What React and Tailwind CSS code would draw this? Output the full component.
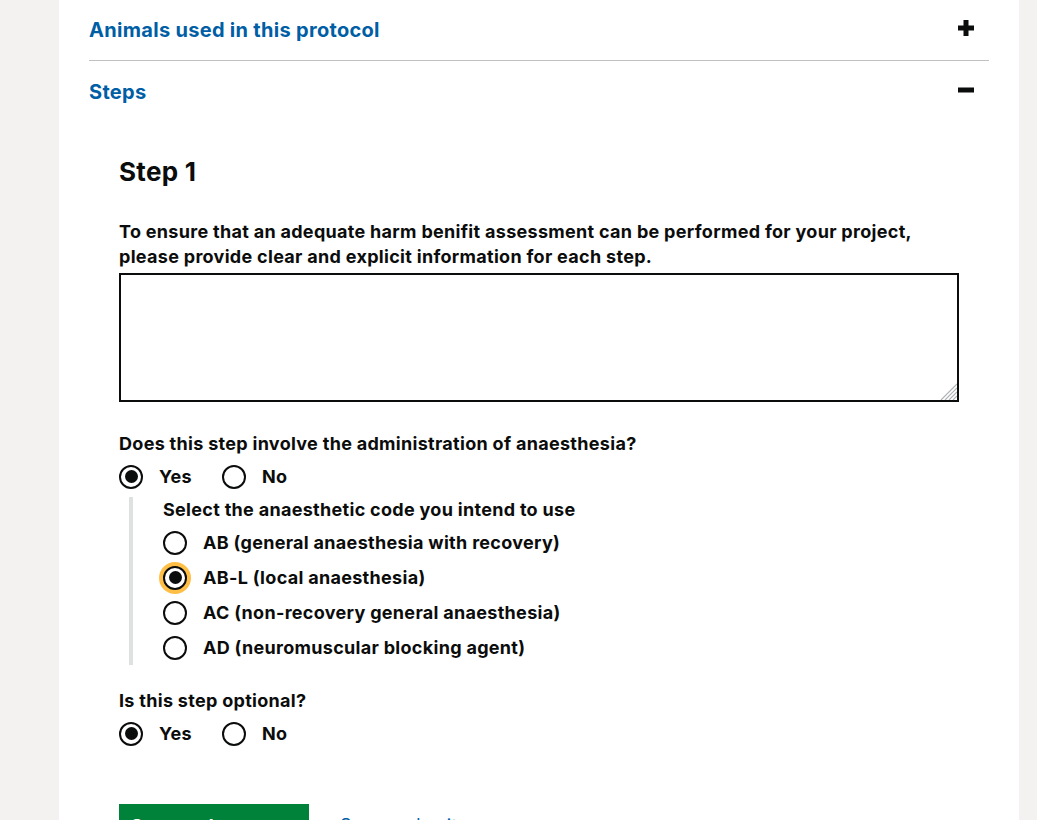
import React, { useState } from 'react';

const Radio = ({ label, checked, focused, onClick }) => (
    <label className="flex items-center h-[35px] cursor-pointer" onClick={onClick}>
        <span
            className={`w-6 h-6 rounded-full border-2 border-[#0b0c0c] bg-white flex items-center justify-center shrink-0 ${focused ? 'shadow-[0_0_0_4px_#ffbf47]' : ''}`}
        >
            {checked && <span className="w-[13px] h-[13px] rounded-full bg-[#0b0c0c]" />}
        </span>
        <span className="ml-4 text-[18px] font-bold tracking-[0.3px] text-[#0b0c0c]">{label}</span>
    </label>
);

const YesNo = ({ value, onChange }) => (
    <div className="flex gap-[30px]">
        <Radio label="Yes" checked={value === 'yes'} onClick={() => onChange('yes')} />
        <Radio label="No" checked={value === 'no'} onClick={() => onChange('no')} />
    </div>
);

const codes = [
    { id: 'AB', label: 'AB (general anaesthesia with recovery)' },
    { id: 'AB-L', label: 'AB-L (local anaesthesia)' },
    { id: 'AC', label: 'AC (non-recovery general anaesthesia)' },
    { id: 'AD', label: 'AD (neuromuscular blocking agent)' },
];

const App = () => {
    const [anaesthesia, setAnaesthesia] = useState('yes');
    const [code, setCode] = useState('AB-L');
    const [optional, setOptional] = useState('yes');

    return (
        <div className="min-h-screen bg-[#f3f2f1] font-['Inter','Noto_Sans',sans-serif] text-[#0b0c0c] tracking-[0.3px]">
            <div className="ml-[59px] w-[960px] bg-white min-h-screen px-[30px]">
                {/* Accordion sections */}
                <div className="flex items-center justify-between h-[61px] border-b border-[#bfc1c3]">
                    <span className="text-[20px] font-bold text-[#005ea5]">Animals used in this protocol</span>
                    <svg className="w-4 h-4 mr-[15px] mt-[-5px]" viewBox="0 0 16 16">
                        <rect x="0" y="5.5" width="16" height="5" fill="#0b0c0c" />
                        <rect x="5.5" y="0" width="5" height="16" fill="#0b0c0c" />
                    </svg>
                </div>
                <div className="flex items-center justify-between h-[61px]">
                    <span className="text-[20px] font-bold text-[#005ea5]">Steps</span>
                    <svg className="w-4 h-4 mr-[15px] mt-[-4px]" viewBox="0 0 16 16">
                        <rect x="0" y="5.5" width="16" height="5" fill="#0b0c0c" />
                    </svg>
                </div>

                {/* Step content */}
                <div className="pl-[30px] pr-[30px] pt-[34px]">
                    <h2 className="text-[26px] leading-[32px] font-bold">Step 1</h2>

                    <label className="block mt-[31px] text-[18px] leading-[25px] font-bold">
                        To ensure that an adequate harm benifit assessment can be performed for your project, please provide clear and explicit information for each step.
                    </label>
                    <div className="relative mt-[4px]">
                        <textarea className="block w-full h-[129px] border-2 border-[#0b0c0c] p-2 text-[18px] outline-none resize-none" />
                        <svg className="absolute right-[2px] bottom-[2px] w-[18px] h-[18px]" viewBox="0 0 18 18">
                            <path d="M18 2 L2 18 M18 6 L6 18 M18 10 L10 18 M18 14 L14 18" stroke="#b1b4b6" strokeWidth="1.2" />
                        </svg>
                    </div>

                    <p className="mt-[29px] text-[18px] leading-[25px] font-bold">
                        Does this step involve the administration of anaesthesia?
                    </p>
                    <div className="mt-[3px]">
                        <YesNo value={anaesthesia} onChange={setAnaesthesia} />
                    </div>

                    {anaesthesia === 'yes' && (
                        <div className="mt-[3px] ml-[10px] border-l-4 border-[#dee0e2] pl-[30px]">
                            <p className="text-[18px] leading-[25px] font-bold">Select the anaesthetic code you intend to use</p>
                            <div className="mt-[3px] mb-[-4px]">
                                {codes.map((c) => (
                                    <Radio
                                        key={c.id}
                                        label={c.label}
                                        checked={code === c.id}
                                        focused={code === c.id}
                                        onClick={() => setCode(c.id)}
                                    />
                                ))}
                            </div>
                        </div>
                    )}

                    <p className="mt-[27px] text-[18px] leading-[25px] font-bold">Is this step optional?</p>
                    <div className="mt-[3px]">
                        <YesNo value={optional} onChange={setOptional} />
                    </div>

                    <div className="mt-[53px] flex items-start gap-[31px] pb-10">
                        <button className="w-[190px] bg-[#00823b] text-white text-[18px] font-bold px-3 pt-[8px] pb-[9px] text-left shadow-[0_2px_0_#003618]">
                            Save and continue
                        </button>
                        <a href="#" className="mt-[8px] text-[18px] text-[#005ea5] underline">Save and exit</a>
                    </div>
                </div>
            </div>
        </div>
    );
};

export default App;
